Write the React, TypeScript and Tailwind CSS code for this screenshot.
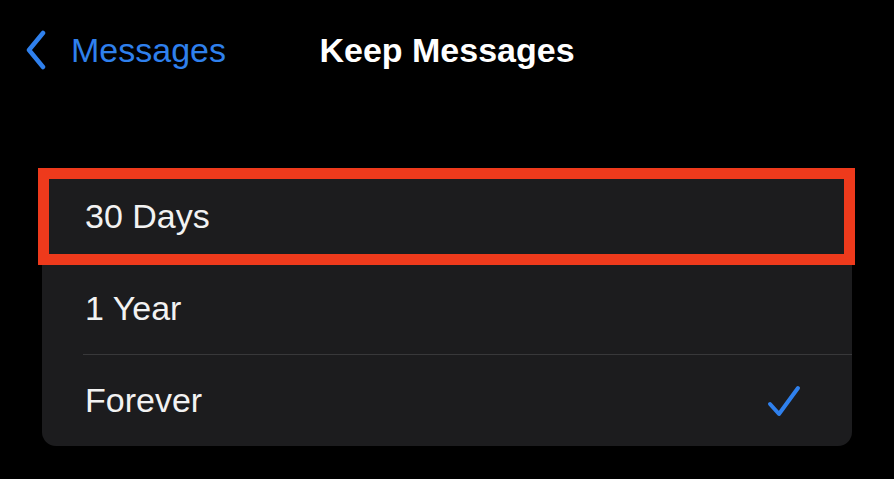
const options = [
  { label: '30 Days', checked: false },
  { label: '1 Year', checked: false },
  { label: 'Forever', checked: true },
];

function ChevronLeft() {
  return (
    <svg width="24" height="40" viewBox="0 0 24 40" fill="none">
      <path d="M19 3 L5 20 L19 37" stroke="#2f80ed" strokeWidth="4.5" strokeLinecap="round" strokeLinejoin="round" />
    </svg>
  );
}

function Check() {
  return (
    <svg width="36" height="34" viewBox="0 0 36 34" fill="none">
      <path d="M4 20 L13 30 L32 4" stroke="#2f80ed" strokeWidth="4" strokeLinecap="round" strokeLinejoin="round" />
    </svg>
  );
}

export default function App() {
  return (
    <div
      className="w-[894px] h-[479px] bg-black overflow-hidden"
      style={{ fontFamily: '"Liberation Sans", Arial, sans-serif' }}
    >
      <div className="relative h-[100px] flex items-center">
        <div className="flex items-center pl-[24px] gap-[23px] text-[#2f80ed] text-[34px]">
          <ChevronLeft />
          <span>Messages</span>
        </div>
        <div className="absolute inset-x-0 top-0 h-[100px] flex items-center justify-center pointer-events-none">
          <span className="text-white text-[34px] font-bold">Keep Messages</span>
        </div>
      </div>

      <div className="relative mt-[71px] mx-[42px] rounded-[14px] bg-[#1c1c1e]">
        {options.map((o, i) => (
          <div key={o.label}>
            {i > 0 && <div className="ml-[41px] h-px bg-[#38383a]" />}
            <div className="h-[91px] flex items-center justify-between pl-[43px] pr-[50px]">
              <span className="text-[34px] text-[#f2f2f2]">{o.label}</span>
              {o.checked && <Check />}
            </div>
          </div>
        ))}
        <div className="absolute left-[-4px] right-[-3px] top-[-3px] h-[97px] border-[11px] border-[#ee3a1c]" />
      </div>
    </div>
  );
}
